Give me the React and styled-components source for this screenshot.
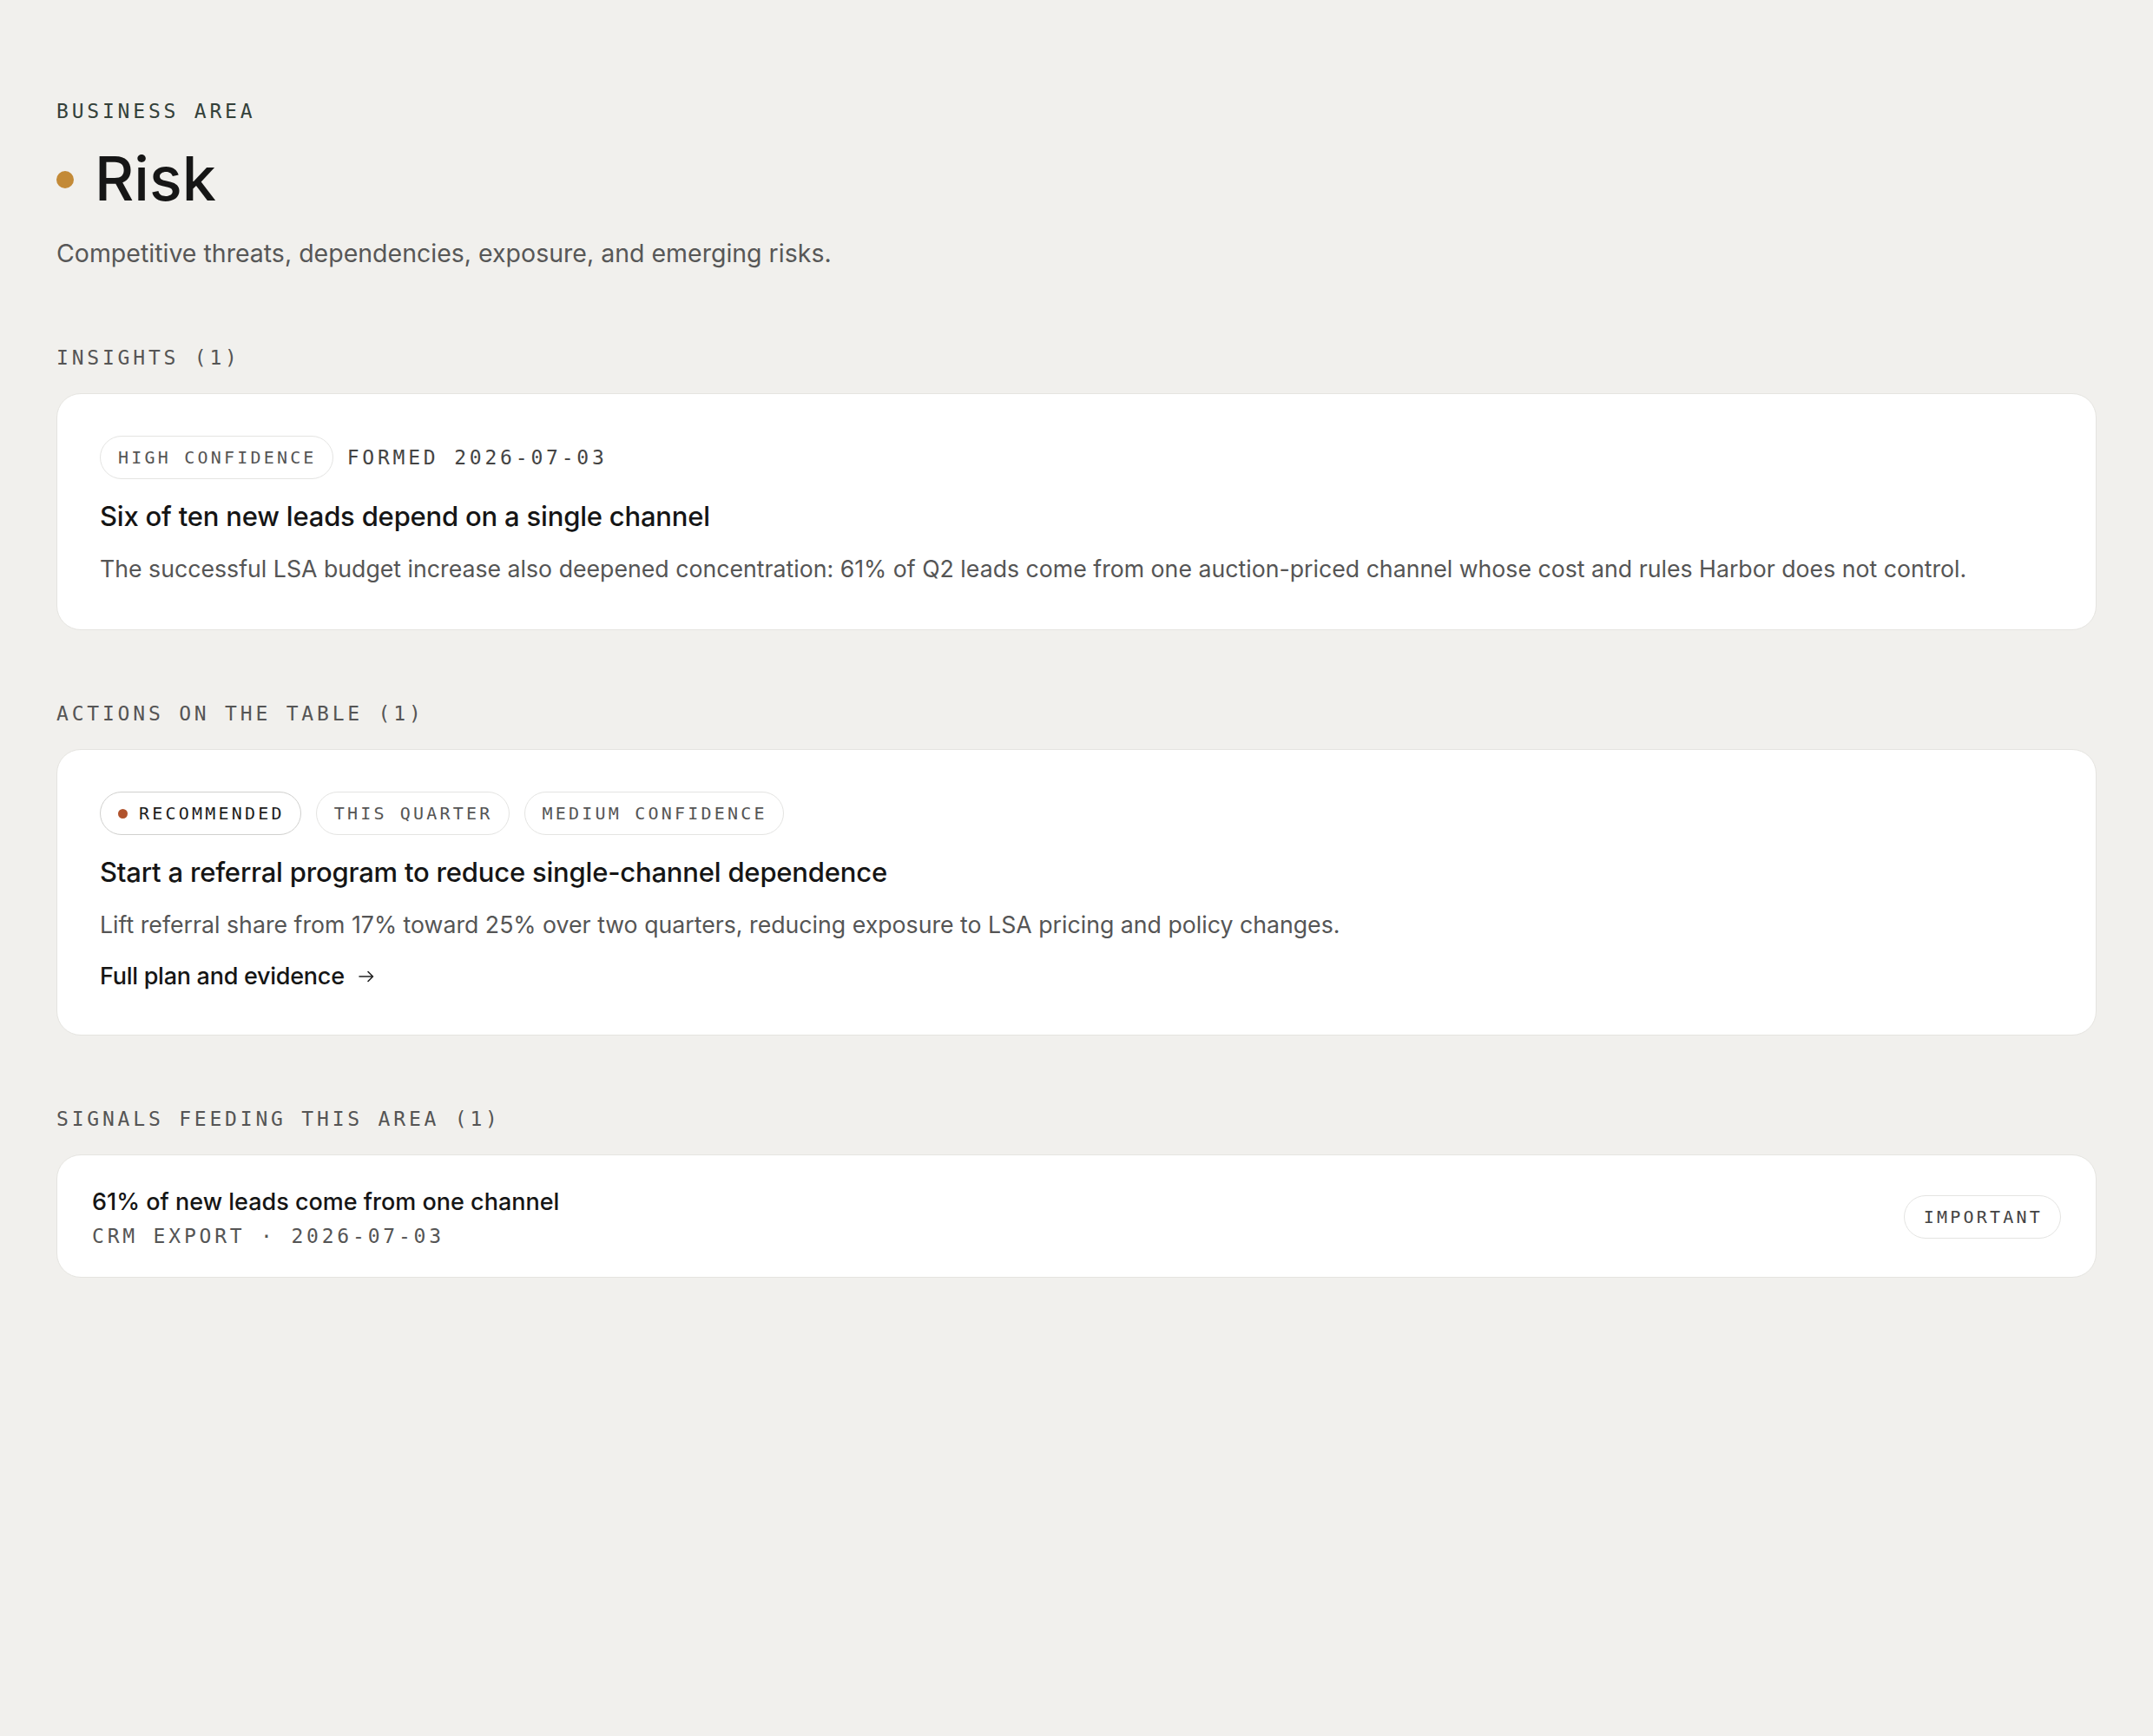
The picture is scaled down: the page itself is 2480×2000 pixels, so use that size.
import React from "react"
import styled, { createGlobalStyle } from "styled-components"

const GlobalStyle = createGlobalStyle`
  html, body {
    margin: 0;
    padding: 0;
    background: #f1f0ed;
  }
  body {
    font-family: Inter, "Noto Sans", sans-serif;
    color: #161616;
    -webkit-font-smoothing: antialiased;
  }
`

const mono = `"DejaVu Sans Mono", "Liberation Mono", monospace`

const Page = styled.main`
  min-height: 2000px;
  box-sizing: border-box;
  padding: 113px 65px 80px;
`

const Eyebrow = styled.div`
  font-family: ${mono};
  font-size: 23px;
  line-height: 30px;
  letter-spacing: 3.8px;
  text-transform: uppercase;
  color: #34413a;
`

const HeadingRow = styled.div`
  display: flex;
  align-items: center;
  gap: 24px;
  margin-top: 23px;
`

const Dot = styled.span`
  flex: none;
  width: ${(p) => p.$size}px;
  height: ${(p) => p.$size}px;
  border-radius: 50%;
  background: ${(p) => p.$color};
  margin-top: ${(p) => p.$nudge || 0}px;
`

const Heading = styled.h1`
  margin: 0;
  font-size: 70px;
  line-height: 80px;
  font-weight: 500;
  letter-spacing: 0;
  color: #161616;
`

const Lede = styled.p`
  margin: 25px 0 0;
  font-size: 28.5px;
  line-height: 42px;
  color: #575757;
`

const Section = styled.section`
  margin-top: ${(p) => p.$top || 81}px;
`

const SectionLabel = styled.h2`
  margin: 0 0 26px;
  font-family: ${mono};
  font-size: 23px;
  line-height: 30px;
  font-weight: 400;
  letter-spacing: 3.8px;
  text-transform: uppercase;
  color: #555;
`

const Card = styled.article`
  background: #fff;
  border: 1px solid #e5e4e0;
  border-radius: 28px;
  padding: 48px 49px ${(p) => p.$bottom || 48}px;
`

const MetaRow = styled.div`
  display: flex;
  align-items: center;
  gap: ${(p) => p.$gap || 16}px;
  margin-bottom: 23px;
`

const Pill = styled.span`
  display: inline-flex;
  align-items: center;
  gap: 13px;
  height: 50px;
  box-sizing: border-box;
  padding: 0 18px 0 20px;
  border: 1px solid ${(p) => (p.$strong ? "#d0d0ce" : "#e4e4e2")};
  border-radius: 999px;
  background: #fff;
  font-family: ${mono};
  font-size: 20px;
  line-height: 28px;
  letter-spacing: 3.2px;
  text-transform: uppercase;
  color: ${(p) => (p.$strong ? "#1c1c1c" : "#555")};
  white-space: nowrap;
`

const MetaText = styled.span`
  font-family: ${mono};
  font-size: 23px;
  line-height: 30px;
  letter-spacing: 3.8px;
  text-transform: uppercase;
  color: #444;
`

const CardTitle = styled.h3`
  margin: 0;
  font-size: 31px;
  line-height: 39px;
  font-weight: 500;
  letter-spacing: -0.2px;
  color: #151515;
`

const CardBody = styled.p`
  margin: 20px 0 0;
  font-size: 26.7px;
  line-height: 42px;
  color: #555;
`

const MoreLink = styled.a`
  display: inline-flex;
  align-items: center;
  gap: 16px;
  margin-top: 20px;
  font-size: 27px;
  line-height: 38px;
  font-weight: 500;
  letter-spacing: -0.01em;
  color: #151515;
  text-decoration: none;
  cursor: pointer;
`

const SignalCard = styled(Card)`
  display: flex;
  align-items: center;
  justify-content: space-between;
  padding: 34px 40px 32px;
`

const SignalTitle = styled.div`
  font-size: 27px;
  line-height: 39px;
  font-weight: 500;
  color: #151515;
`

const SignalMeta = styled(MetaText)`
  display: block;
  margin-top: 5px;
  color: #555;
`

const SignalPill = styled(Pill)`
  padding: 0 20px 0 22px;
  color: #444;
`

const Arrow = () => (
  <svg width="18" height="14" viewBox="0 0 18 14" fill="none">
    <path
      d="M1 7h15.5M11 1.5 16.5 7 11 12.5"
      stroke="#222"
      strokeWidth="1.6"
      strokeLinecap="round"
      strokeLinejoin="round"
    />
  </svg>
)

const App = () => {
  return (
    <>
      <GlobalStyle />
      <Page>
        <Eyebrow>Business Area</Eyebrow>
        <HeadingRow>
          <Dot $size={20} $color="#c38a37" $nudge={2} />
          <Heading>Risk</Heading>
        </HeadingRow>
        <Lede>Competitive threats, dependencies, exposure, and emerging risks.</Lede>

        <Section $top={84}>
          <SectionLabel>Insights (1)</SectionLabel>
          <Card $bottom={49}>
            <MetaRow>
              <Pill>High confidence</Pill>
              <MetaText>Formed 2026-07-03</MetaText>
            </MetaRow>
            <CardTitle>Six of ten new leads depend on a single channel</CardTitle>
            <CardBody>
              The successful LSA budget increase also deepened concentration: 61% of Q2
              leads come from one auction-priced channel whose cost and rules Harbor does
              not control.
            </CardBody>
          </Card>
        </Section>

        <Section>
          <SectionLabel>Actions on the table (1)</SectionLabel>
          <Card>
            <MetaRow $gap={17}>
              <Pill $strong>
                <Dot $size={11} $color="#b0532d" />
                Recommended
              </Pill>
              <Pill>This quarter</Pill>
              <Pill>Medium confidence</Pill>
            </MetaRow>
            <CardTitle>Start a referral program to reduce single-channel dependence</CardTitle>
            <CardBody>
              Lift referral share from 17% toward 25% over two quarters, reducing exposure
              to LSA pricing and policy changes.
            </CardBody>
            <MoreLink>
              Full plan and evidence
              <Arrow />
            </MoreLink>
          </Card>
        </Section>

        <Section>
          <SectionLabel>Signals feeding this area (1)</SectionLabel>
          <SignalCard>
            <div>
              <SignalTitle>61% of new leads come from one channel</SignalTitle>
              <SignalMeta>CRM export · 2026-07-03</SignalMeta>
            </div>
            <SignalPill>Important</SignalPill>
          </SignalCard>
        </Section>
      </Page>
    </>
  )
}

export default App
